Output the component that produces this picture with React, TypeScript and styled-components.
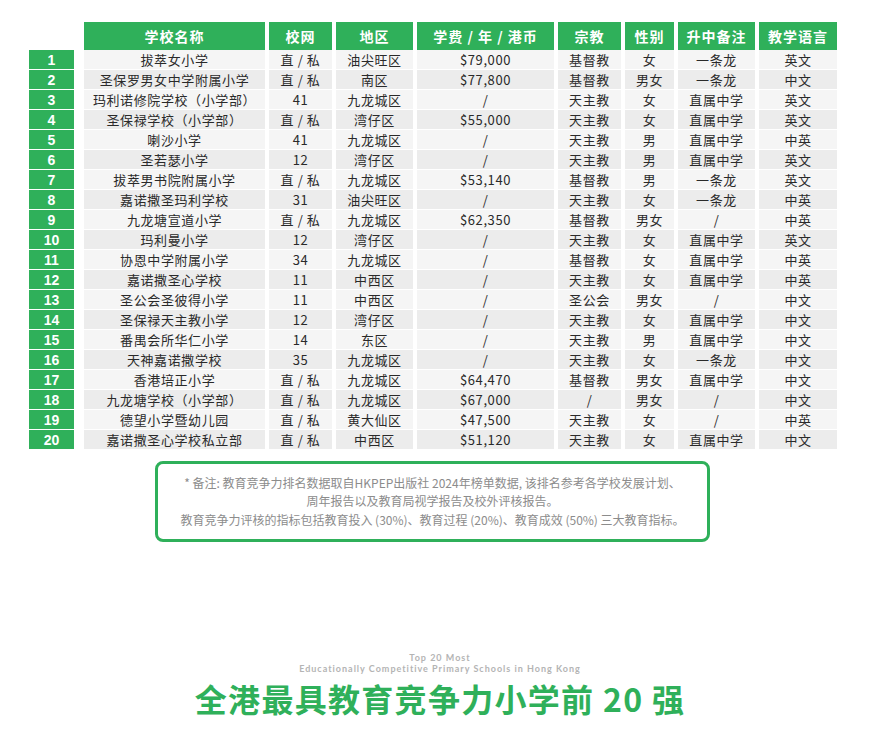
import React from "react";
import styled, { createGlobalStyle } from "styled-components";

const GREEN = "#2fb05a";

const GlobalStyle = createGlobalStyle`
  html, body {
    margin: 0;
    padding: 0;
    background: #ffffff;
  }
  body {
    font-family: "Noto Sans CJK SC", "Noto Sans", sans-serif;
    color: #333;
  }
`;

const Page = styled.div`
  width: 873px;
  height: 739px;
  padding: 22px 0 0 29px;
  box-sizing: border-box;
  display: flex;
  flex-direction: column;
`;

const Row = styled.div<{ $gap: number }>`
  display: flex;
  margin-bottom: ${(p) => p.$gap}px;
`;

const NumCell = styled.div<{ $empty?: boolean }>`
  width: 45px;
  margin-right: 10px;
  background: ${(p) => (p.$empty ? "transparent" : GREEN)};
  color: #fff;
  font-family: "Liberation Sans", "Noto Sans", sans-serif;
  font-weight: 700;
  font-size: 14px;
  display: flex;
  align-items: center;
  justify-content: center;
`;

const Cells = styled.div`
  display: grid;
  grid-template-columns: 181px 63px 77px 137px 63px 49px 77px 78px;
  column-gap: 4px;
`;

const HeadCell = styled.div`
  height: 28px;
  background: ${GREEN};
  color: #fff;
  font-weight: 700;
  font-size: 14px;
  letter-spacing: 1px;
  display: flex;
  align-items: center;
  justify-content: center;
  white-space: nowrap;
`;

const BodyCell = styled.div<{ $alt: boolean }>`
  height: 19px;
  background: ${(p) => (p.$alt ? "#ececec" : "#f5f5f5")};
  color: #2a2a2a;
  font-size: 13px;
  letter-spacing: 0.6px;
  display: flex;
  align-items: center;
  justify-content: center;
  white-space: nowrap;
`;

const NoteBox = styled.div`
  margin: 11px 0 0 126px;
  width: 555px;
  height: 81px;
  box-sizing: border-box;
  border: 3px solid ${GREEN};
  border-radius: 8px;
  display: flex;
  flex-direction: column;
  align-items: center;
  justify-content: center;
`;

const NoteLine = styled.div`
  font-size: 12px;
  line-height: 18.5px;
  color: #8c8c8c;
  white-space: nowrap;
`;

const Footer = styled.div`
  margin-top: 110px;
  width: 822px;
  display: flex;
  flex-direction: column;
  align-items: center;
`;

const SubTitle = styled.div`
  font-family: "Lato", "Liberation Sans", sans-serif;
  font-weight: 700;
  font-size: 9px;
  line-height: 11px;
  letter-spacing: 1px;
  color: #b4b4b4;
  text-align: center;
`;

const Title = styled.div`
  margin-top: 1px;
  font-weight: 700;
  font-size: 32px;
  letter-spacing: 1.3px;
  color: ${GREEN};
  white-space: nowrap;
`;

const headers = ["学校名称", "校网", "地区", "学费 / 年 / 港币", "宗教", "性别", "升中备注", "教学语言"];

const rows: string[][] = [
  ["拔萃女小学", "直 / 私", "油尖旺区", "$79,000", "基督教", "女", "一条龙", "英文"],
  ["圣保罗男女中学附属小学", "直 / 私", "南区", "$77,800", "基督教", "男女", "一条龙", "中文"],
  ["玛利诺修院学校（小学部）", "41", "九龙城区", "/", "天主教", "女", "直属中学", "英文"],
  ["圣保禄学校（小学部）", "直 / 私", "湾仔区", "$55,000", "天主教", "女", "直属中学", "英文"],
  ["喇沙小学", "41", "九龙城区", "/", "天主教", "男", "直属中学", "中英"],
  ["圣若瑟小学", "12", "湾仔区", "/", "天主教", "男", "直属中学", "英文"],
  ["拔萃男书院附属小学", "直 / 私", "九龙城区", "$53,140", "基督教", "男", "一条龙", "英文"],
  ["嘉诺撒圣玛利学校", "31", "油尖旺区", "/", "天主教", "女", "一条龙", "中英"],
  ["九龙塘宣道小学", "直 / 私", "九龙城区", "$62,350", "基督教", "男女", "/", "中英"],
  ["玛利曼小学", "12", "湾仔区", "/", "天主教", "女", "直属中学", "英文"],
  ["协恩中学附属小学", "34", "九龙城区", "/", "基督教", "女", "直属中学", "中英"],
  ["嘉诺撒圣心学校", "11", "中西区", "/", "天主教", "女", "直属中学", "中英"],
  ["圣公会圣彼得小学", "11", "中西区", "/", "圣公会", "男女", "/", "中文"],
  ["圣保禄天主教小学", "12", "湾仔区", "/", "天主教", "女", "直属中学", "中文"],
  ["番禺会所华仁小学", "14", "东区", "/", "天主教", "男", "直属中学", "中文"],
  ["天神嘉诺撒学校", "35", "九龙城区", "/", "天主教", "女", "一条龙", "中文"],
  ["香港培正小学", "直 / 私", "九龙城区", "$64,470", "基督教", "男女", "直属中学", "中文"],
  ["九龙塘学校（小学部）", "直 / 私", "九龙城区", "$67,000", "/", "男女", "/", "中文"],
  ["德望小学暨幼儿园", "直 / 私", "黄大仙区", "$47,500", "天主教", "女", "/", "中英"],
  ["嘉诺撒圣心学校私立部", "直 / 私", "中西区", "$51,120", "天主教", "女", "直属中学", "中文"],
];

export default function App() {
  return (
    <>
      <GlobalStyle />
      <Page>
        <Row $gap={0}>
          <NumCell $empty />
          <Cells>
            {headers.map((h) => (
              <HeadCell key={h}>{h}</HeadCell>
            ))}
          </Cells>
        </Row>
        {rows.map((r, i) => (
          <Row key={i} $gap={1}>
            <NumCell>{i + 1}</NumCell>
            <Cells>
              {r.map((c, j) => (
                <BodyCell key={j} $alt={i % 2 === 1}>
                  {c}
                </BodyCell>
              ))}
            </Cells>
          </Row>
        ))}
        <NoteBox>
          <NoteLine>* 备注: 教育竞争力排名数据取自HKPEP出版社 2024年榜单数据, 该排名参考各学校发展计划、</NoteLine>
          <NoteLine>周年报告以及教育局视学报告及校外评核报告。</NoteLine>
          <NoteLine>教育竞争力评核的指标包括教育投入 (30%)、教育过程 (20%)、教育成效 (50%) 三大教育指标。</NoteLine>
        </NoteBox>
        <Footer>
          <SubTitle>Top 20 Most</SubTitle>
          <SubTitle>Educationally Competitive Primary Schools in Hong Kong</SubTitle>
          <Title>全港最具教育竞争力小学前 20 强</Title>
        </Footer>
      </Page>
    </>
  );
}
